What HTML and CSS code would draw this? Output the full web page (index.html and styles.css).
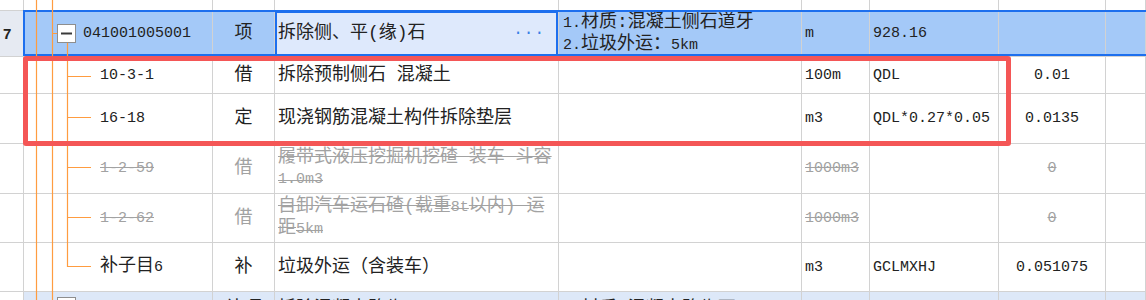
FILE: index.html
```html
<!DOCTYPE html>
<html lang="zh-CN">
<head>
  <meta charset="UTF-8">
  <title>清单定额</title>
  <link rel="stylesheet" href="styles.css">
</head>
<body>

  <div class="sheet">
    <div class="row r-top">
      <div class="cell hdr"></div>
      <div class="cell"></div>
      <div class="cell"></div>
      <div class="cell"></div>
      <div class="cell"></div>
      <div class="cell"></div>
      <div class="cell"></div>
      <div class="cell"></div>
      <div class="cell"></div>
    </div>

    <div class="row r-sel">
      <div class="cell hdr sel-hdr">7</div>
      <div class="cell code lvl0">041001005001</div>
      <div class="cell type">项</div>
      <div class="cell name active"><span>拆除侧、平(缘)石</span><span class="more">···</span></div>
      <div class="cell feat"><span><span class="n">1.</span>材质:混凝土侧石道牙<br><span class="n">2.</span>垃圾外运：<span class="n">5km</span></span></div>
      <div class="cell unit">m</div>
      <div class="cell expr">928.16</div>
      <div class="cell qty"></div>
      <div class="cell"></div>
    </div>

    <div class="row r-short">
      <div class="cell hdr"></div>
      <div class="cell code lvl1">10-3-1</div>
      <div class="cell type">借</div>
      <div class="cell name">拆除预制侧石 混凝土</div>
      <div class="cell feat"></div>
      <div class="cell unit">100m</div>
      <div class="cell expr">QDL</div>
      <div class="cell qty">0.01</div>
      <div class="cell"></div>
    </div>

    <div class="row r-tall">
      <div class="cell hdr"></div>
      <div class="cell code lvl1">16-18</div>
      <div class="cell type">定</div>
      <div class="cell name">现浇钢筋混凝土构件拆除垫层</div>
      <div class="cell feat"></div>
      <div class="cell unit">m3</div>
      <div class="cell expr">QDL*0.27*0.05</div>
      <div class="cell qty">0.0135</div>
      <div class="cell"></div>
    </div>

    <div class="row r-tall off">
      <div class="cell hdr"></div>
      <div class="cell code lvl1 strike">1-2-59</div>
      <div class="cell type">借</div>
      <div class="cell name strike"><span>履带式液压挖掘机挖碴 装车 斗容<br><span class="n">1.0m3</span></span></div>
      <div class="cell feat"></div>
      <div class="cell unit strike">1000m3</div>
      <div class="cell expr"></div>
      <div class="cell qty strike">0</div>
      <div class="cell"></div>
    </div>

    <div class="row r-mid off">
      <div class="cell hdr"></div>
      <div class="cell code lvl1 strike">1-2-62</div>
      <div class="cell type">借</div>
      <div class="cell name strike"><span>自卸汽车运石碴(载重<span class="n">8t</span>以内) 运<br>距<span class="n">5km</span></span></div>
      <div class="cell feat"></div>
      <div class="cell unit strike">1000m3</div>
      <div class="cell expr"></div>
      <div class="cell qty strike">0</div>
      <div class="cell"></div>
    </div>

    <div class="row r-mid">
      <div class="cell hdr"></div>
      <div class="cell code lvl1"><span><span class="zh">补子目</span>6</span></div>
      <div class="cell type">补</div>
      <div class="cell name">垃圾外运（含装车）</div>
      <div class="cell feat"></div>
      <div class="cell unit">m3</div>
      <div class="cell expr">GCLMXHJ</div>
      <div class="cell qty">0.051075</div>
      <div class="cell"></div>
    </div>

    <div class="row r-mid r-next">
      <div class="cell hdr"></div>
      <div class="cell code lvl0">041001006001</div>
      <div class="cell type">补项</div>
      <div class="cell name">拆除混凝土路缘</div>
      <div class="cell feat"><span><span class="n">1.</span>材质:混凝土路缘石</span></div>
      <div class="cell unit">m</div>
      <div class="cell expr">120.5</div>
      <div class="cell qty"></div>
      <div class="cell"></div>
    </div>

    <!-- tree connectors drawn over the code column -->
    <svg class="tree" width="1146" height="300" viewBox="0 0 1146 300">
      <g stroke="#ff9c40" stroke-width="1.2" fill="none">
        <path d="M36.5 0 V300 M52.5 0 V300 M52 33.5 H58" />
        <path d="M67.5 43 V267 M67 76.5 H91 M67 117.5 H91 M67 167.5 H91 M67 217.5 H91 M67 266.5 H91" />
      </g>
      <rect x="57.5" y="24.5" width="18" height="18" fill="#fff" stroke="#8e8e8e" />
      <path d="M61 33.5 H72" stroke="#3a3a3a" stroke-width="2" />
      <rect x="57.5" y="297.5" width="18" height="18" fill="#fff" stroke="#8e8e8e" />
    </svg>

    <div class="mark"></div>
  </div>

</body>
</html>
```

FILE: styles.css
```css
* {
  margin: 0;
  padding: 0;
  box-sizing: border-box;
}

body {
  background: #fff;
  font-family: "Liberation Mono", "Noto Sans CJK SC", monospace;
  font-size: 15px;
  color: #222;
}

.sheet {
  position: relative;
  width: 1146px;
  height: 300px;
  overflow: hidden;
  background: #fff;
}

.row {
  display: grid;
  grid-template-columns: 24px 189px 62px 284px 243px 68px 129px 107px 1fr;
  border-bottom: 1px solid #d2d2d2;
}

.r-top { height: 11px; }
.r-sel { height: 46px; }
.r-short { height: 37px; }
.r-tall { height: 50px; }
.r-mid { height: 49px; }

.cell {
  display: flex;
  align-items: center;
  border-right: 1px solid #d2d2d2;
  padding: 0 3px;
  line-height: 21px;
  white-space: nowrap;
  overflow: hidden;
}

.hdr {
  font-family: "Liberation Sans", sans-serif;
  font-weight: bold;
  font-size: 15px;
  padding: 0 3px;
}

.code.lvl0 { padding-left: 59px; }
.code.lvl1 { padding-left: 76px; }

.type {
  justify-content: center;
  font-size: 18px;
}

.name,
.feat {
  font-size: 18px;
}

.feat { padding-left: 4px; }

.n { font-size: 15px; }
.zh { font-size: 18px; }

.qty { justify-content: center; }

/* selected bill row */
.r-sel {
  position: relative;
  background: #a4c9f8;
}

.r-sel .sel-hdr {
  background: #e6eaf2;
}

.r-sel::after {
  content: "";
  position: absolute;
  left: 23px;
  right: -4px;
  top: -1px;
  bottom: 0;
  border: 2px solid #1d6fee;
}

.active {
  background: #dee9fc;
  box-shadow: inset 0 0 0 2px #1d6fee;
}

.more {
  margin-left: auto;
  margin-right: 10px;
  color: #3a7fe6;
  font-size: 16px;
  letter-spacing: 1px;
}

/* disabled quota rows */
.off .cell {
  color: #a2a2a2;
}

.strike {
  text-decoration: line-through;
}

.r-next {
  background: #dde8f8;
}

.r-next .hdr {
  background: #fff;
}

.r-next .cell {
  align-items: flex-start;
  padding-top: 7px;
}

.tree {
  position: absolute;
  left: 0;
  top: 0;
  pointer-events: none;
}

.mark {
  position: absolute;
  left: 23px;
  top: 56px;
  width: 988px;
  height: 90px;
  border: 5px solid #f45656;
  border-radius: 3px;
}
```
